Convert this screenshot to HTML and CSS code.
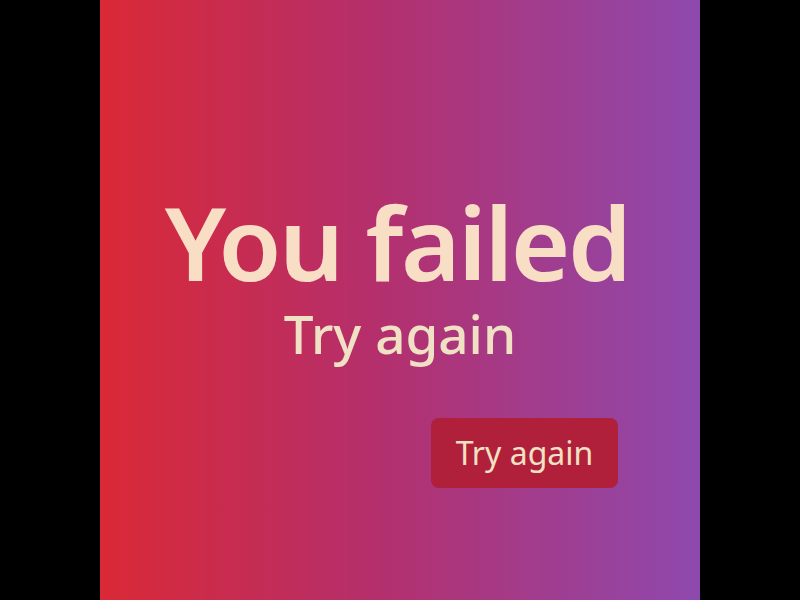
FILE: index.html
```html
<!DOCTYPE html>
<html>
<head>
<meta charset="utf-8">
<link rel="stylesheet" href="styles.css">
</head>
<body>
<main class="panel">
  <h1 class="title">You failed</h1>
  <p class="subtitle">Try again</p>
  <div class="actions">
    <button class="btn">Try again</button>
  </div>
</main>
</body>
</html>
```
FILE: styles.css
```css
html, body {
  margin: 0;
  padding: 0;
  background: #000;
  height: 100%;
}
.panel {
  width: 600px;
  height: 600px;
  margin: 0 auto;
  background: linear-gradient(to right, #da2936 0%, #b52f6b 45%, #8e49ae 100%);
  display: flex;
  flex-direction: column;
  align-items: center;
  font-family: "Noto Sans", sans-serif;
  box-sizing: border-box;
  padding-top: 192px;
}
.title {
  margin: 0;
  font-size: 102px;
  font-weight: 600;
  letter-spacing: -2.5px;
  line-height: 100px;
  color: #f9dec6;
  padding-right: 6px;
}
.subtitle {
  margin: 10px 0 0;
  font-size: 53px;
  font-weight: 500;
  line-height: 64px;
  color: #f0e0c4;
}
.actions {
  align-self: stretch;
  display: flex;
  justify-content: flex-end;
  padding-right: 82px;
  margin-top: 52px;
}
.btn {
  width: 187px;
  height: 70px;
  border: none;
  border-radius: 8px;
  background: #b0203a;
  color: #f0e0c4;
  font-family: "Noto Sans", sans-serif;
  font-size: 32px;
  padding: 0 0 2px;
}
```
